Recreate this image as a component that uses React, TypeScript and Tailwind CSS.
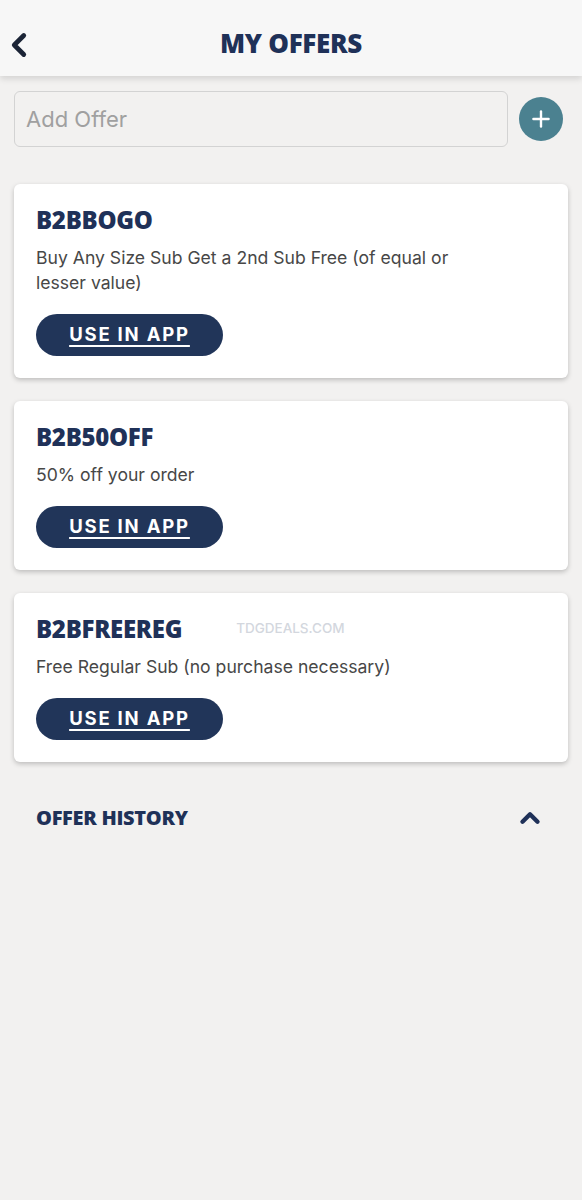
import { ChevronLeft, ChevronUp, Plus } from 'lucide-react';

const offers = [
  { code: 'B2BBOGO', desc: 'Buy Any Size Sub Get a 2nd Sub Free (of equal or lesser value)' },
  { code: 'B2B50OFF', desc: '50% off your order' },
  { code: 'B2BFREEREG', desc: 'Free Regular Sub (no purchase necessary)', mark: true },
];

const heading = { fontFamily: '"Open Sans", "Liberation Sans", sans-serif' };
const body = { fontFamily: 'Inter, "Liberation Sans", sans-serif' };

function OfferCard({ code, desc, mark }: { code: string; desc: string; mark?: boolean }) {
  return (
    <div className="rounded-[6px] bg-white px-[22px] pb-[22px] pt-[19px] shadow-[0_2px_5px_rgba(0,0,0,0.22)]">
      <div className="flex items-center">
        <h2
          style={heading}
          className="text-[24px] font-extrabold leading-[34px] tracking-[-0.3px] text-[#1f3158]"
        >
          {code}
        </h2>
        {mark && (
          <span
            style={body}
            className="ml-[54px] text-[13.5px] font-medium leading-none text-[#d3d7de]"
          >
            TDGDEALS.COM
          </span>
        )}
      </div>
      <p style={body} className="mt-[8px] max-w-[450px] text-[17.6px] leading-[25px] text-[#474747]">
        {desc}
      </p>
      <button
        style={body}
        className="mt-[19px] flex h-[42px] w-[187px] items-center justify-center rounded-full bg-[#213559] text-[18.5px] font-bold tracking-[1.8px] text-white underline decoration-[2px] underline-offset-[4px]"
      >
        USE IN APP
      </button>
    </div>
  );
}

export default function App() {
  return (
    <div className="min-h-[1200px] bg-[#f2f1f0]">
      <header className="relative flex h-[76px] items-center justify-center bg-[#f7f7f7] shadow-[0_3px_6px_rgba(0,0,0,0.12)]">
        <ChevronLeft className="absolute left-0 top-[26px] h-[38px] w-[38px] text-[#1b2436]" strokeWidth={3} />
        <h1
          style={heading}
          className="mt-[10px] text-[26px] font-extrabold tracking-[-0.3px] text-[#1f3158]"
        >
          MY OFFERS
        </h1>
      </header>

      <div className="flex items-center gap-[11px] pl-[14px] pr-[19px] pt-[15px]">
        <div className="flex h-[56px] flex-1 items-center rounded-[6px] border border-[#d3d3d3] bg-[#f2f1f0] px-[11px]">
          <span style={body} className="text-[22px] text-[#a0a0a0]">
            Add Offer
          </span>
        </div>
        <div className="flex h-[44px] w-[44px] items-center justify-center rounded-full bg-[#4b8190]">
          <Plus className="h-[26px] w-[26px] text-white" strokeWidth={2.2} />
        </div>
      </div>

      <div className="flex flex-col gap-[23px] px-[14px] pt-[37px]">
        {offers.map(o => (
          <OfferCard key={o.code} {...o} />
        ))}
      </div>

      <div className="flex items-center justify-between pl-[36px] pr-[37px] pt-[41px]">
        <h3 style={heading} className="text-[20px] font-extrabold tracking-[-0.3px] text-[#1f3158]">
          OFFER HISTORY
        </h3>
        <ChevronUp className="h-[30px] w-[30px] text-[#1f3158]" strokeWidth={3.5} />
      </div>
    </div>
  );
}
